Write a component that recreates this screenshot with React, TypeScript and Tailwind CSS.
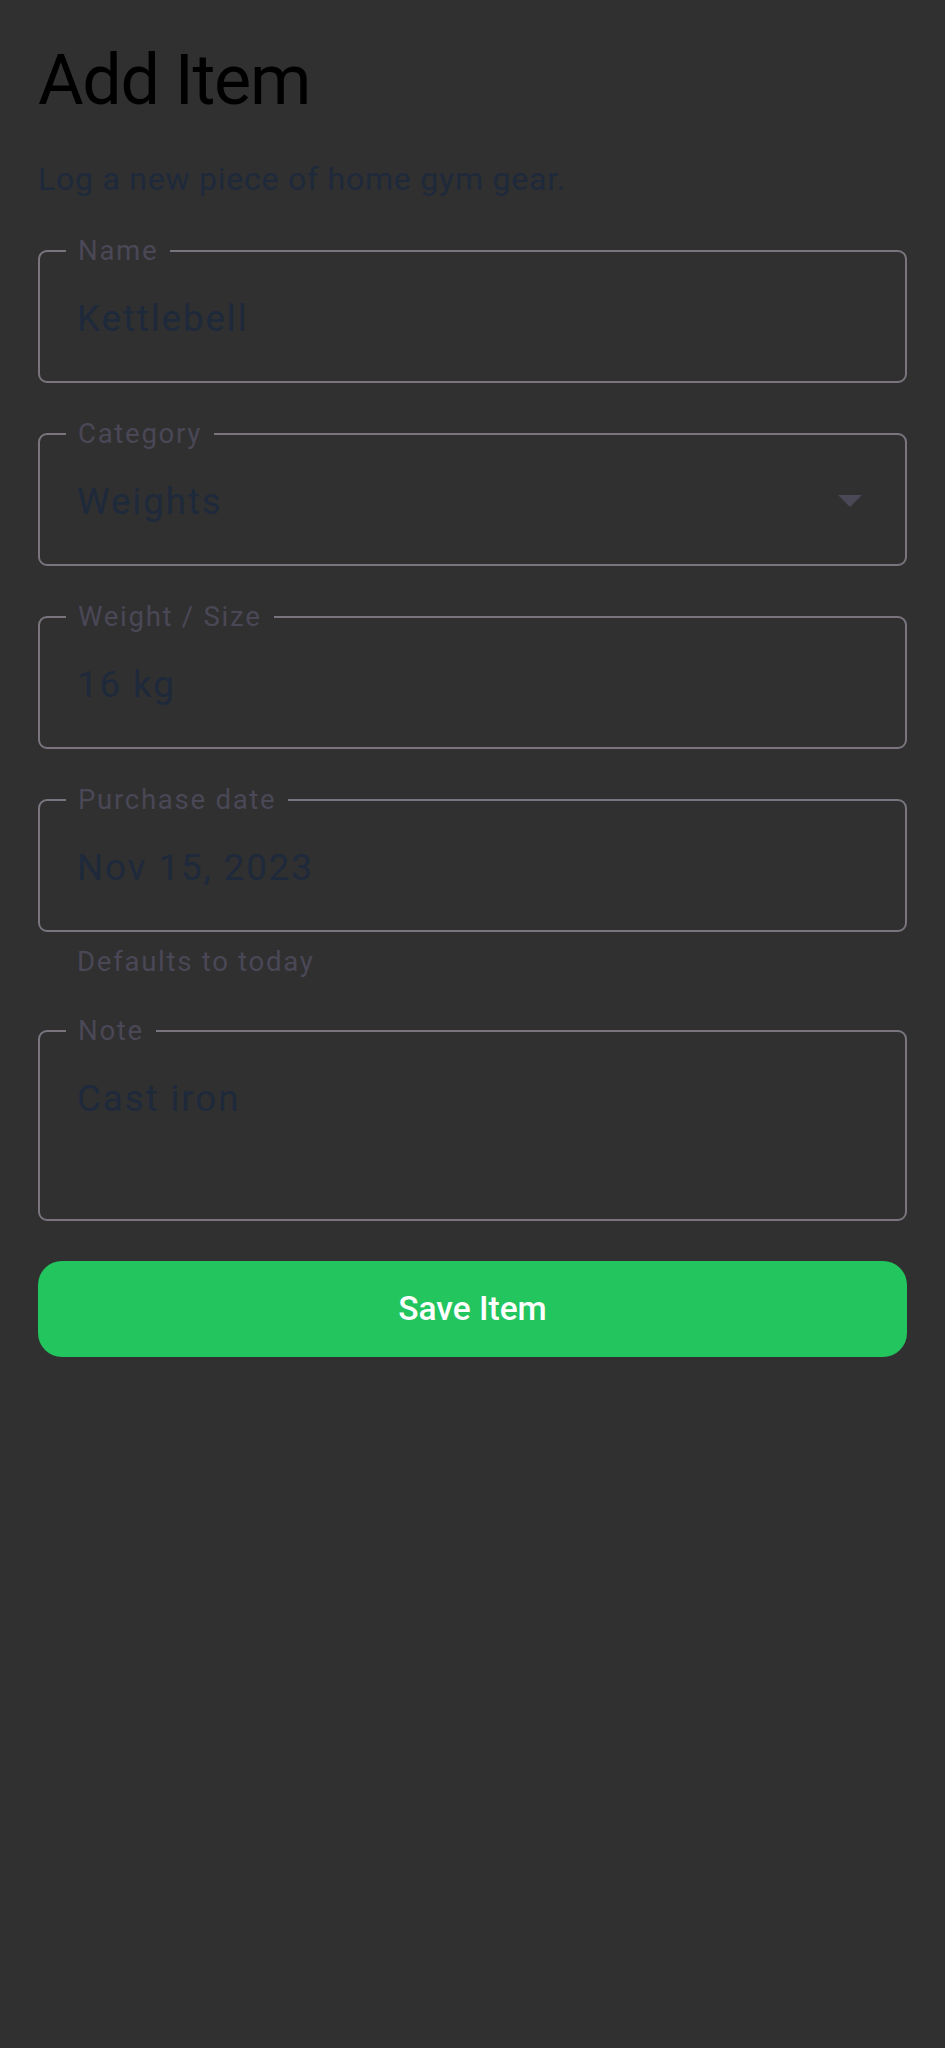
import React from "react";

interface FieldProps {
    label: string;
    value: string;
    trailing?: React.ReactNode;
    tall?: boolean;
}

function OutlinedField({ label, value, trailing, tall }: FieldProps) {
    return (
        <fieldset className="border-2 border-[#79747e] rounded-[9px] px-0 min-w-0">
            <legend className="ml-[26px] pl-[12px] pr-[12px] text-[27.6px] leading-[28px] tracking-[1.7px] text-[#4a4756]">
                {label}
            </legend>
            <div
                className={`flex justify-between items-start pl-[37px] pr-[43px] pt-[32px] ${tall ? "h-[174px]" : "h-[116px]"}`}
            >
                <span className="text-[36.75px] leading-[44px] tracking-[1.9px] text-[#1e293b]">{value}</span>
                {trailing}
            </div>
        </fieldset>
    );
}

function DropdownArrow() {
    return (
        <svg width="24" height="12" viewBox="0 0 24 12" className="mt-[15px]">
            <path d="M0 0 L24 0 L12 12 Z" fill="#4a4756" />
        </svg>
    );
}

export default function App() {
    return (
        <div className="min-h-[2048px] w-full bg-[#303030] font-['Roboto',sans-serif]">
            <div className="flex flex-col px-[38px] pt-[38px]">
                <h1 className="text-[70px] leading-[84px] font-normal tracking-[-1.3px] text-black">Add Item</h1>
                <p className="mt-[34px] text-[32.15px] leading-[46px] tracking-[0.7px] text-[#1e293b]">
                    Log a new piece of home gym gear.
                </p>

                <div className="mt-[35px] flex flex-col gap-[37px]">
                    <OutlinedField label="Name" value="Kettlebell" />
                    <OutlinedField label="Category" value="Weights" trailing={<DropdownArrow />} />
                    <OutlinedField label="Weight / Size" value="16 kg" />
                    <div className="flex flex-col">
                        <OutlinedField label="Purchase date" value="Nov 15, 2023" />
                        <p className="mt-[12px] pl-[39px] text-[27.6px] leading-[36px] tracking-[1.7px] text-[#4a4756]">
                            Defaults to today
                        </p>
                    </div>
                    <OutlinedField label="Note" value="Cast iron" tall />
                </div>

                <button className="mt-[40px] h-[96px] w-full rounded-[24px] bg-[#22c55e] text-white text-[33.5px] font-medium">
                    Save Item
                </button>
            </div>
        </div>
    );
}
